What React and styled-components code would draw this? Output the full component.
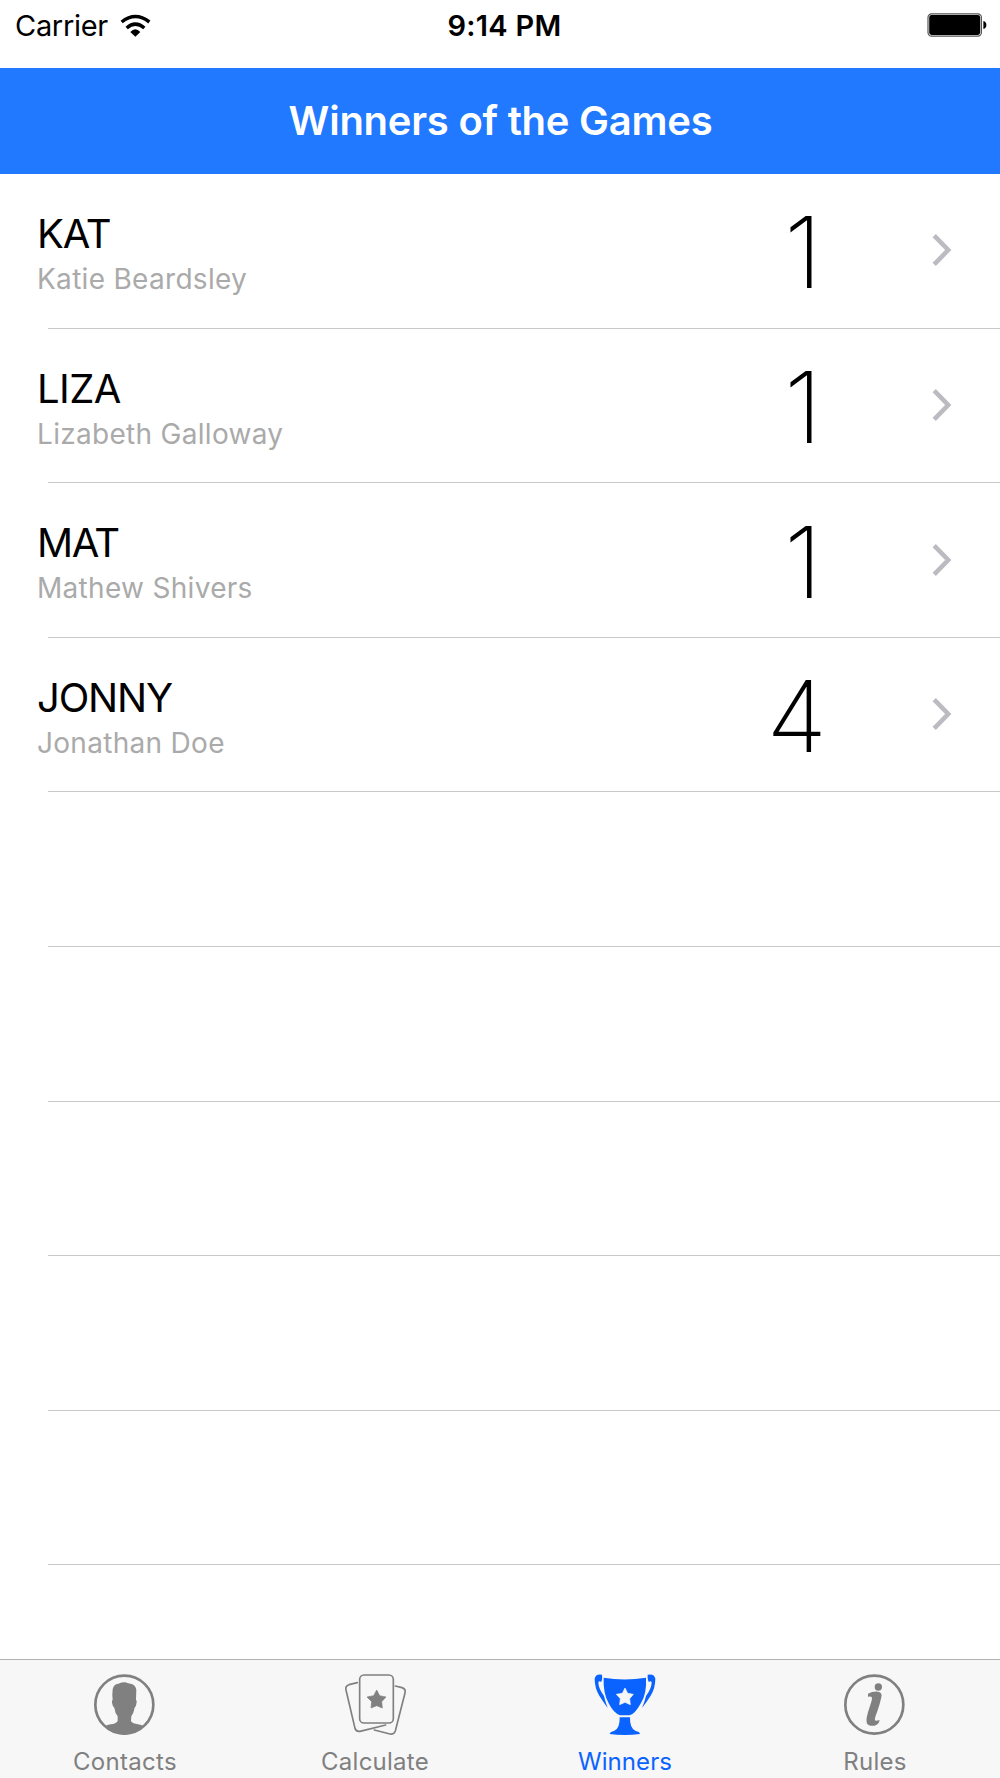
import React from 'react';
import styled, {createGlobalStyle} from 'styled-components';

const GlobalStyle=createGlobalStyle`
    *{
        box-sizing:border-box;
    }
    body{
        margin:0;
        background-color:#fff;
        font-family:Inter, "Liberation Sans", sans-serif;
    }
`;
const Screen=styled.div`
    display:flex;
    flex-direction:column;
    width:1000px;
    height:1778px;
    overflow:hidden;
    background-color:#fff;
`;
const StatusBar=styled.header`
    display:grid;
    grid-template-columns:1fr auto 1fr;
    align-items:center;
    flex:none;
    height:67.7px;
    padding:0 13px 17.3px 15px;
    color:#000;
`;
const Carrier=styled.div`
    display:flex;
    align-items:center;
    gap:12px;
    font-size:29px;
    letter-spacing:-.3px;
`;
const Time=styled.div`
    padding-left:7px;
    font-size:29px;
    font-weight:600;
    letter-spacing:.3px;
`;
const Battery=styled.svg`
    justify-self:end;
`;
const NavBar=styled.h1`
    display:flex;
    align-items:center;
    justify-content:center;
    flex:none;
    height:106px;
    margin:0;
    padding-left:1px;
    background-color:#2079ff;
    color:#fff;
    font-size:40px;
    font-weight:600;
    letter-spacing:-.25px;
`;
const List=styled.ul`
    flex:1;
    min-height:0;
    margin:0;
    padding:.4px 0 0;
    overflow:hidden;
    list-style:none;
`;
const Row=styled.li`
    display:flex;
    align-items:center;
    height:154.6px;
    padding:0 48px 2px 37px;
    background-image:linear-gradient(#c8c7cc, #c8c7cc);
    background-repeat:no-repeat;
    background-size:952px 1px;
    background-position:right bottom;
`;
const Person=styled.div`
    flex:1;
    padding-top:12px;
    height:128px;
`;
const Name=styled.div`
    height:45px;
    margin-top:12.7px;
    line-height:46px;
    font-size:40px;
    letter-spacing:${({$spacing})=>$spacing}px;
    color:#000;
`;
const FullName=styled.div`
    line-height:46px;
    font-size:28px;
    letter-spacing:.3px;
    color:#aaa;
`;
const Score=styled.div`
    width:70px;
    margin-right:105px;
    padding-top:4px;
    padding-right:${({$inset})=>$inset}px;
    font-size:99px;
    line-height:100px;
    font-weight:200;
    text-align:right;
    color:#000;
`;
const TabBar=styled.nav`
    display:grid;
    grid-template-columns:repeat(4, 1fr);
    flex:none;
    height:119px;
    border-top:1px solid #b2b2b2;
    background-color:#f7f7f7;
`;
const Tab=styled.a`
    display:flex;
    flex-direction:column;
    align-items:center;
    padding-top:13.3px;
    color:${({$active})=>$active?'#0b63ff':'#808080'};
`;
const TabLabel=styled.span`
    margin-top:10px;
    font-size:24px;
    line-height:30px;
    letter-spacing:${({$spacing})=>$spacing}px;
`;

const winners=[
    {name:'KAT', fullName:'Katie Beardsley', score:1, spacing:-1.2},
    {name:'LIZA', fullName:'Lizabeth Galloway', score:1, spacing:-.6},
    {name:'MAT', fullName:'Mathew Shivers', score:1, spacing:-1.5},
    {name:'JONNY', fullName:'Jonathan Doe', score:4, spacing:-1.2},
];
const emptyRows=6;

const WifiIcon=()=>(
    <svg width="31" height="23" viewBox="361 36 93 69" fill="none" stroke="currentColor" strokeWidth="10.5">
        <path d="M366 60Q407 27 449 60"/>
        <path d="M381 78Q407 55 434 78"/>
        <path d="M392 90Q407 73 422 90L407 104Z" fill="currentColor" stroke="none"/>
    </svg>
);
const BatteryIcon=()=>(
    <Battery width="60" height="24" viewBox="0 0 60 24">
        <rect x="1" y=".8" width="53.4" height="22.4" rx="3.6" fill="#fff" stroke="#555" strokeWidth="1.2"/>
        <rect x="2.2" y="2" width="51" height="20" rx="2.4" fill="#000"/>
        <path d="M56.4 8Q59.4 8.8 59.4 12Q59.4 15.2 56.4 16Z" fill="#000"/>
    </Battery>
);
const Chevron=()=>(
    <svg width="20" height="34" viewBox="0 0 20 34" fill="none" stroke="#bcbbc1" strokeWidth="4.6">
        <path d="M2.2 2.6L16.2 17L2.2 31.4"/>
    </svg>
);
const TabIcon=({children})=>(
    <svg width="63.33" height="63.33" viewBox="100 70 190 190" fill="currentColor">{children}</svg>
);
const ContactsIcon=()=>(
    <TabIcon>
        <circle cx="194" cy="165" r="87" fill="none" stroke="currentColor" strokeWidth="8"/>
        <path d="M159 119Q161 104 176 102Q188 97 197 98Q205 102 216 103Q227 106 230 120L229 150Q233 153 230 163Q229 172 225 174Q222 190 215 200L214 215Q219 222 235 224Q247 226 251 230Q230 254 194 255Q158 254 137 230Q141 226 153 224Q169 222 174 214L174 200Q166 190 164 174Q159 172 158 163Q155 153 159 151Q157 135 159 119Z"/>
    </TabIcon>
);
const CalculateIcon=()=>(
    <TabIcon>
        <g fill="none" stroke="currentColor" strokeWidth="5" strokeLinecap="round">
            <rect x="150" y="76" width="101" height="144" rx="13"/>
            <path d="M143 99L118 105Q106 109 109 121L136 236Q139 247 151 245L228 226"/>
            <path d="M257 109L277 114Q289 118 286 130L257 244Q253 255 241 253L194 241"/>
        </g>
        <path d="M201 121L210 138L229 142L216 156L218 175L201 168L184 175L186 156L172 142L192 138Z" stroke="currentColor" strokeWidth="2" strokeLinejoin="round"/>
    </TabIcon>
);
const WinnersIcon=()=>(
    <TabIcon>
        <path d="M132 84Q194 95 259 84Q262 130 244 160Q226 193 210 197L181 197Q163 192 147 161Q130 130 132 84Z"/>
        <path d="M127 75Q108 71 105 87Q105 115 119 138Q131 157 144 175Q136 153 133 139Q117 117 116 99Q118 92 124 97Q129 92 127 75Z"/>
        <path d="M264 75Q284 71 287 87Q287 115 273 138Q261 157 247 175Q256 153 259 139Q275 117 276 99Q274 92 268 97Q263 92 264 75Z"/>
        <path d="M180 203L211 203Q210 237 228 244Q240 246 241 253Q220 256 195 256Q170 256 150 253Q151 247 163 244Q181 238 180 203Z"/>
        <path d="M196 115L204 131L221 134L210 147L212 165L196 158L180 165L182 147L170 134L188 131Z" fill="#f7f7f7" stroke="#f7f7f7" strokeWidth="2" strokeLinejoin="round"/>
    </TabIcon>
);
const RulesIcon=()=>(
    <TabIcon>
        <circle cx="194" cy="165" r="87" fill="none" stroke="currentColor" strokeWidth="8"/>
        <circle cx="206" cy="112" r="11"/>
        <path d="M175 132Q188 125 204 126Q219 128 215 143Q211 163 202 188Q194 207 196 212Q199 215 210 211Q209 221 201 225Q190 231 178 227Q168 222 171 204Q174 188 182 166Q189 146 186 142Q183 139 175 141Z"/>
    </TabIcon>
);

const tabs=[
    {label:'Contacts', Icon:ContactsIcon, spacing:.3},
    {label:'Calculate', Icon:CalculateIcon, spacing:.25},
    {label:'Winners', Icon:WinnersIcon, spacing:.1, active:true},
    {label:'Rules', Icon:RulesIcon, spacing:.25},
];

const App=()=>(
    <>
        <GlobalStyle/>
        <Screen>
            <StatusBar>
                <Carrier>Carrier <WifiIcon/></Carrier>
                <Time>9:14 PM</Time>
                <BatteryIcon/>
            </StatusBar>
            <NavBar>Winners of the Games</NavBar>
            <List>
                {winners.map(({name, fullName, score, spacing})=>(
                    <Row key={name}>
                        <Person>
                            <Name $spacing={spacing}>{name}</Name>
                            <FullName>{fullName}</FullName>
                        </Person>
                        <Score $inset={score===1?5:0}>{score}</Score>
                        <Chevron/>
                    </Row>
                ))}
                {Array.from({length:emptyRows}, (_, i)=><Row key={i}/>)}
            </List>
            <TabBar>
                {tabs.map(({label, Icon, spacing, active})=>(
                    <Tab key={label} $active={active}>
                        <Icon/>
                        <TabLabel $spacing={spacing}>{label}</TabLabel>
                    </Tab>
                ))}
            </TabBar>
        </Screen>
    </>
);

export default App;
